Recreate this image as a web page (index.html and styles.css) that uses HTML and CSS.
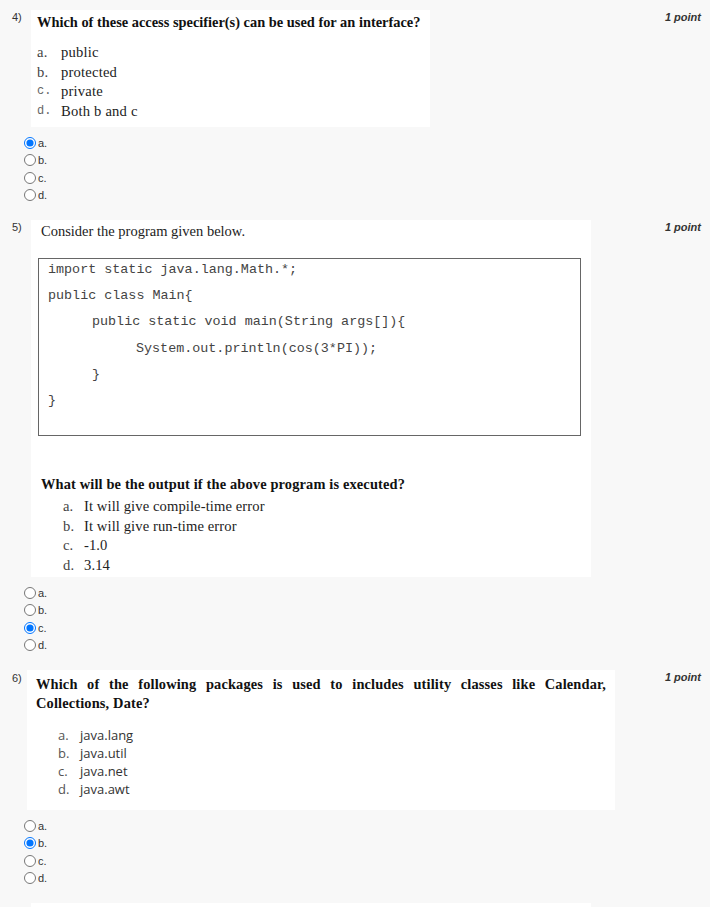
FILE: index.html
```html
<!DOCTYPE html>
<html>
<head>
<meta charset="utf-8">
<link rel="stylesheet" href="styles.css">
</head>
<body>
<div class="page">

  <section class="q q4">
    <div class="q-head">
      <span class="num">4)</span>
      <div class="box box4">
        <p class="title title4">Which of these access specifier(s) can be used for an interface?</p>
        <ol class="opts opts4">
          <li><span class="lt">a.</span>public</li>
          <li><span class="lt">b.</span>protected</li>
          <li><span class="lt lt-mono">c.</span>private</li>
          <li><span class="lt lt-mono">d.</span>Both b and c</li>
        </ol>
      </div>
      <span class="pt">1 point</span>
    </div>
    <div class="answers">
      <label class="ans"><input type="radio" name="q4" checked><span>a.</span></label>
      <label class="ans"><input type="radio" name="q4"><span>b.</span></label>
      <label class="ans"><input type="radio" name="q4"><span>c.</span></label>
      <label class="ans"><input type="radio" name="q4"><span>d.</span></label>
    </div>
  </section>

  <section class="q q5">
    <div class="q-head">
      <span class="num">5)</span>
      <div class="box box5">
        <p class="lead">Consider the program given below.</p>
        <div class="code">
          <div class="cl">import static java.lang.Math.*;</div>
          <div class="cl">public class Main{</div>
          <div class="cl ind1">public static void main(String args[]){</div>
          <div class="cl ind2">System.out.println(cos(3*PI));</div>
          <div class="cl ind1">}</div>
          <div class="cl">}</div>
        </div>
        <p class="title title5">What will be the output if the above program is executed?</p>
        <ol class="opts opts5">
          <li><span class="lt">a.</span>It will give compile-time error</li>
          <li><span class="lt">b.</span>It will give run-time error</li>
          <li><span class="lt">c.</span>-1.0</li>
          <li><span class="lt">d.</span>3.14</li>
        </ol>
      </div>
      <span class="pt">1 point</span>
    </div>
    <div class="answers">
      <label class="ans"><input type="radio" name="q5"><span>a.</span></label>
      <label class="ans"><input type="radio" name="q5"><span>b.</span></label>
      <label class="ans"><input type="radio" name="q5" checked><span>c.</span></label>
      <label class="ans"><input type="radio" name="q5"><span>d.</span></label>
    </div>
  </section>

  <section class="q q6">
    <div class="q-head">
      <span class="num">6)</span>
      <div class="box box6">
        <p class="title title6">Which of the following packages is used to includes utility classes like Calendar, Collections, Date?</p>
        <ol class="opts opts6">
          <li><span class="lt">a.</span>java.lang</li>
          <li><span class="lt">b.</span>java.util</li>
          <li><span class="lt">c.</span>java.net</li>
          <li><span class="lt">d.</span>java.awt</li>
        </ol>
      </div>
      <span class="pt">1 point</span>
    </div>
    <div class="answers">
      <label class="ans"><input type="radio" name="q6"><span>a.</span></label>
      <label class="ans"><input type="radio" name="q6" checked><span>b.</span></label>
      <label class="ans"><input type="radio" name="q6"><span>c.</span></label>
      <label class="ans"><input type="radio" name="q6"><span>d.</span></label>
    </div>
  </section>

  <section class="q q7">
    <div class="q-head">
      <span class="num"></span>
      <div class="box box7"></div>
    </div>
  </section>

</div>
</body>
</html>
```

FILE: styles.css
```css
html, body {
  margin: 0;
  padding: 0;
  background: #f8f8f8;
}

.page {
  padding: 10px 9px 0 12px;
  font-family: "Liberation Sans", Arial, sans-serif;
  color: #333;
  overflow: hidden;
  height: 907px;
  box-sizing: border-box;
}

.q {
  margin-bottom: 16px;
}

.q-head {
  display: flex;
  align-items: flex-start;
}

.num {
  width: 19px;
  flex: none;
  font-size: 11px;
  line-height: 14px;
  color: #333;
}

.pt {
  margin-left: auto;
  font-size: 11px;
  line-height: 14px;
  font-weight: bold;
  font-style: italic;
  color: #333;
  margin-top: 0;
}

.box {
  background: #fff;
  flex: none;
  font-family: "Liberation Serif", "Times New Roman", serif;
  color: #111;
}

.title {
  margin: 0;
  font-size: 14.4px;
  letter-spacing: 0.15px;
  font-weight: bold;
  line-height: 20px;
}

.title4 {
  white-space: nowrap;
  letter-spacing: 0;
}

.opts {
  list-style: none;
  margin: 0;
  padding: 0;
}

.opts li {
  display: flex;
}

.lt {
  color: #444;
}

/* Q4 */
.box4 {
  width: 399px;
  height: 117px;
  box-sizing: border-box;
  padding: 2px 6px 0 6px;
}

.opts4 {
  margin-top: 11px;
  font-size: 14.6px;
  letter-spacing: 0.2px;
  line-height: 19.5px;
  color: #222;
}

.opts4 .lt {
  width: 24px;
}

.lt-mono {
  font-family: "Liberation Mono", monospace;
  font-size: 12px;
  letter-spacing: 0;
  color: #666;
}

/* Q5 */
.box5 {
  width: 560px;
  height: 357px;
  box-sizing: border-box;
  padding: 1px 10px 0 7px;
}

.lead {
  margin: 0 0 17px 3px;
  font-size: 14.5px;
  line-height: 20px;
  color: #222;
}

.code {
  border: 1px solid #666;
  padding: 0 9px 19px 9px;
  font-family: "Liberation Mono", "Courier New", monospace;
  font-size: 13.4px;
  color: #444;
}

.cl {
  height: 26.2px;
  line-height: 22px;
  white-space: pre;
}

.ind1 {
  padding-left: 44px;
}

.ind2 {
  padding-left: 88px;
}

.title5 {
  margin: 38px 0 0 3px;
}

.opts5 {
  margin: 3px 0 0 25px;
  font-size: 14.6px;
  letter-spacing: 0.1px;
  line-height: 19.6px;
  color: #222;
}

.opts5 .lt {
  width: 21px;
}

/* Q6 */
.q6 .q-head .num {
  margin-top: 1px;
}

.box6 {
  width: 588px;
  height: 140px;
  box-sizing: border-box;
  padding: 5px 9px 0 9px;
  margin-left: -4px;
}

.title6 {
  line-height: 19px;
  text-align: justify;
}

.opts6 {
  margin: 13px 0 0 22px;
  font-family: "Open Sans", "Noto Sans", sans-serif;
  font-size: 13px;
  line-height: 18px;
  color: #333;
}

.opts6 .lt {
  width: 22px;
  color: #555;
}

/* Q7 stub */
.box7 {
  width: 560px;
  height: 60px;
}

/* answers */
.answers {
  margin-top: 7px;
  padding-left: 12px;
}

.ans {
  display: flex;
  align-items: center;
  height: 17.5px;
  font-size: 11px;
  color: #333;
}

.ans input {
  margin: 0 2px 0 0;
  width: 12px;
  height: 12px;
}
```
